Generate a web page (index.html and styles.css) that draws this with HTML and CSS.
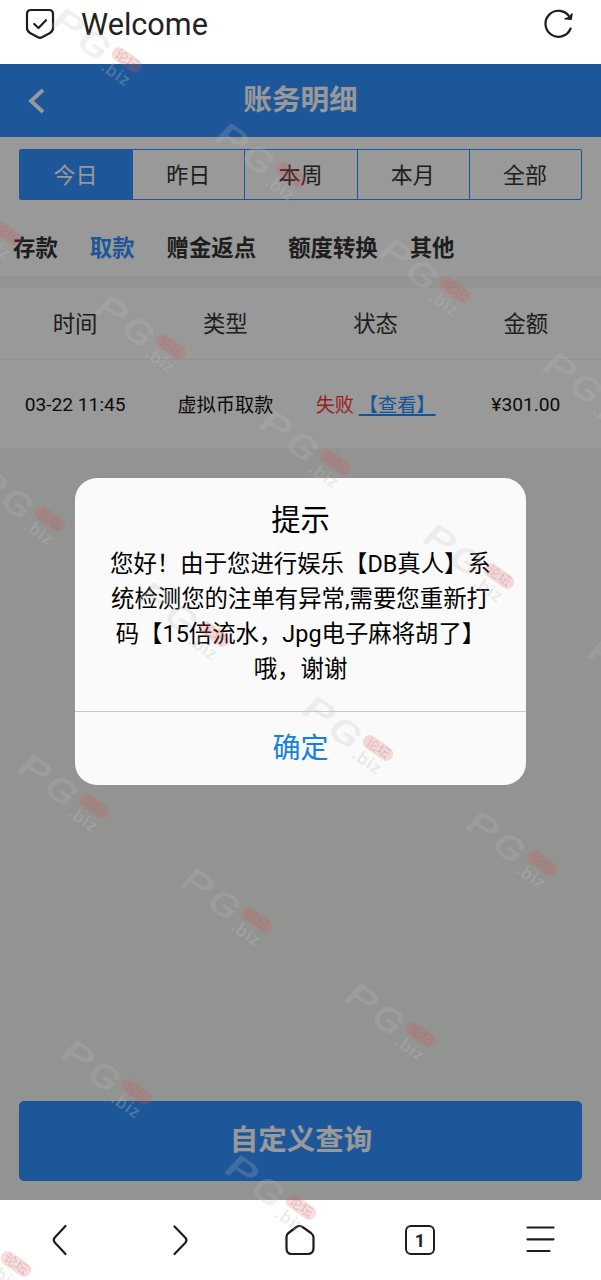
FILE: index.html
```html
<!DOCTYPE html>
<html lang="zh-CN">
<head>
<meta charset="utf-8">
<title>账务明细</title>
<link rel="stylesheet" href="styles.css">
</head>
<body>
<div class="screen">
  <header class="browser-bar">
    <svg class="shield" width="30" height="32" viewBox="0 0 30 32"><path d="M6 2H24Q28 2 28 6V20Q28 23 25 25L17 29.3Q15 30.4 13 29.3L5 25Q2 23 2 20V6Q2 2 6 2Z"/><path d="M9.2 16L13.5 20L21 12.2"/></svg>
    <span class="site-title">Welcome</span>
    <svg class="reload" width="32" height="32" viewBox="0 0 32 32"><path d="M27.6 20.5A13 13 0 1 1 26.6 9"/><path class="solid" d="M29 5.8L28.2 11.2L22 10.8Q26.5 10 29 5.8Z"/></svg>
  </header>

  <main class="page">
    <div class="page-header">
      <svg class="back" width="20" height="28" viewBox="0 0 20 28"><path d="M16 3L4 14L16 25"/></svg>
      <h1>账务明细</h1>
    </div>
    <div class="top-panel">
      <div class="ranges">
        <span class="range active">今日</span><span class="range">昨日</span><span class="range">本周</span><span class="range">本月</span><span class="range">全部</span>
      </div>
      <nav class="cats">
        <span>存款</span><span class="current">取款</span><span>赠金返点</span><span>额度转换</span><span>其他</span>
      </nav>
    </div>
    <div class="row head"><span>时间</span><span>类型</span><span>状态</span><span>金额</span></div>
    <div class="row record"><span>03-22 11:45</span><span>虚拟币取款</span><span><em>失败</em> <a>【查看】</a></span><span>¥301.00</span></div>
    <div class="query">自定义查询</div>
    <div class="overlay">
      <section class="dialog">
        <h2>提示</h2>
        <p>您好！由于您进行娱乐【DB真人】系<br>统检测您的注单有异常,需要您重新打<br>码【15倍流水，Jpg电子麻将胡了】<br>哦，谢谢</p>
        <div class="confirm">确定</div>
      </section>
    </div>
  </main>

  <footer class="nav-bar">
    <svg width="34" height="34" viewBox="0 0 34 34"><path d="M22.5 3L11.8 14.5Q9.7 17 11.8 19.5L22.5 31"/></svg>
    <svg width="34" height="34" viewBox="0 0 34 34"><path d="M11.5 3.5L22.4 14.8Q24.5 17.3 22.4 19.8L11.5 31"/></svg>
    <svg width="34" height="34" viewBox="0 0 34 34"><path d="M3.5 25V14Q3.5 11.5 5.5 10L13.5 4Q16.5 2 19.5 4L28 10Q30.5 12 30.5 14.5V25Q30.5 31 24.5 31H8.5Q3.5 31 3.5 25Z"/></svg>
    <span class="tab-count">1</span>
    <svg width="34" height="34" viewBox="0 0 34 34"><path d="M4.5 4.5H30.5M4.5 16.3H30.5M4.5 28H26.5"/></svg>
  </footer>

  <svg class="watermarks" width="601" height="1280" viewBox="0 0 601 1280">
    <defs>
      <g id="mark">
        <g transform="rotate(35)">
          <text class="wm-letter" transform="translate(-85 15) skewX(-8) scale(1.5 1)">P</text>
          <text class="wm-letter" transform="translate(-52 17) skewX(-8) scale(1.4 1)">G</text>
          <rect class="wm-pill" x="-17" y="-7" width="34" height="14" rx="7"/>
          <text class="wm-label" x="0" y="4.5">论坛</text>
          <text class="wm-biz" x="-17" y="23">.biz</text>
        </g>
      </g>
    </defs>
    <use href="#mark" x="127" y="60"/><use href="#mark" x="291" y="175"/><use href="#mark" x="455" y="290"/><use href="#mark" x="619" y="404"/>
    <use href="#mark" x="7" y="233"/><use href="#mark" x="171" y="347"/><use href="#mark" x="335" y="462"/><use href="#mark" x="499" y="576"/><use href="#mark" x="663" y="691"/>
    <use href="#mark" x="50" y="519"/><use href="#mark" x="214" y="634"/><use href="#mark" x="378" y="748"/><use href="#mark" x="542" y="863"/>
    <use href="#mark" x="94" y="806"/><use href="#mark" x="257" y="920"/><use href="#mark" x="421" y="1035"/>
    <use href="#mark" x="137" y="1092"/><use href="#mark" x="301" y="1207"/><use href="#mark" x="16" y="1264"/>
  </svg>
</div>
</body>
</html>
```
FILE: styles.css
```css
* { box-sizing: border-box; }
body { margin: 0; background: #fff; font-family: Roboto, "Noto Sans CJK SC", sans-serif; color: #000; }
.screen { position: relative; width: 601px; height: 1280px; overflow: hidden; display: flex; flex-direction: column; }
svg { display: block; fill: none; stroke: #1d1d1f; stroke-width: 2.2; stroke-linecap: round; stroke-linejoin: round; flex: none; }

.browser-bar { height: 64px; padding: 0 25px 15px; display: flex; align-items: center; }
.shield { margin-top: -2px; }
.site-title { margin-left: 26px; font-size: 30.6px; line-height: 48px; color: #222; flex: 1; }
.reload { margin-right: 1px; margin-top: -2px; }
.reload .solid { fill: #1d1d1f; stroke-width: 1.4; }

.page { position: relative; height: 1136px; flex: none; background: #f4f7f4; display: flex; flex-direction: column; }
.page-header { height: 73px; background: #3291ff; display: grid; grid-template-columns: 100px 1fr 100px; align-items: center; }
.back { margin-left: 27px; stroke: #fff; stroke-width: 3.8; stroke-linecap: butt; stroke-linejoin: miter; }
h1 { margin: 0; padding-bottom: 1px; text-align: center; color: #fff; font-size: 28.6px; line-height: 40px; font-weight: 700; }
.top-panel { height: 139px; background: #fff; padding-top: 12px; }
.ranges { margin: 0 19px; height: 51px; display: grid; grid-template-columns: repeat(5, 1fr); border: 1px solid #3291ff; border-radius: 2px; }
.range { display: flex; align-items: center; justify-content: center; font-size: 22px; padding: 0 1px 4px 0; color: #333; border-left: 1.5px solid #3291ff; }
.range.active { background: #3291ff; color: #fff; border: 0; }
.cats { display: flex; gap: 32px; padding: 31px 13px 0; font-size: 22.4px; line-height: 34px; font-weight: 700; color: #333; white-space: nowrap; }
.cats .current { color: #3291ff; }
.row { display: grid; grid-template-columns: repeat(4, 1fr); align-items: center; text-align: center; background: #fff; white-space: nowrap; flex: none; }
.head { margin-top: 12px; height: 72px; padding-bottom: 3px; font-size: 22.4px; color: #333; border-bottom: 1px solid #f1f4f4; }
.record { height: 88px; font-size: 19.2px; color: #111; }
.record em { font-style: normal; color: #ff3434; }
.record a { color: #1c8cff; text-decoration: underline; text-underline-offset: 2px; text-decoration-thickness: 2px; }
.query { margin: auto 19px 19px; height: 80px; border-radius: 5px; background: #3291ff; color: #fff; display: flex; align-items: center; justify-content: center; padding: 0 0 7px 1px; font-size: 28.5px; font-weight: 700; }

.overlay { position: absolute; inset: 0; background: rgba(0, 0, 0, .4); display: flex; justify-content: center; align-items: flex-start; padding-top: 414px; }
.dialog { width: 451px; height: 307px; border-radius: 22px; background: #fafafa; text-align: center; display: flex; flex-direction: column; }
h2 { margin: 22px 0 0; font-size: 29.3px; line-height: 40px; font-weight: 400; }
.dialog p { margin: 7px 0 0; font-size: 23.4px; line-height: 35.1px; white-space: nowrap; }
.confirm { margin-top: auto; height: 74px; border-top: 1px solid #c8c8c8; display: flex; justify-content: center; align-items: center; padding-bottom: 5px; font-size: 28px; color: #147fe5; }

.nav-bar { height: 80px; padding-right: 1px; display: grid; grid-template-columns: repeat(5, 120px); justify-content: center; align-items: center; justify-items: center; }
.tab-count { width: 30px; height: 30px; border: 2.3px solid #1d1d1f; border-radius: 6px; font-size: 18px; font-weight: 700; line-height: 27px; text-align: center; color: #1d1d1f; }

.watermarks { position: absolute; left: 0; top: 0; pointer-events: none; }
.wm-letter { font: 300 31px Roboto, sans-serif; stroke: #bebebe; stroke-opacity: .23; stroke-width: 2; }
.wm-pill { fill: #e65050; fill-opacity: .2; stroke: none; }
.wm-label { font: 13px "Noto Sans CJK SC", sans-serif; text-anchor: middle; fill: #8a7070; fill-opacity: .3; stroke: none; }
.wm-biz { font: 600 17px "Open Sans", sans-serif; letter-spacing: .8px; fill: #bebebe; fill-opacity: .32; stroke: none; }
```
